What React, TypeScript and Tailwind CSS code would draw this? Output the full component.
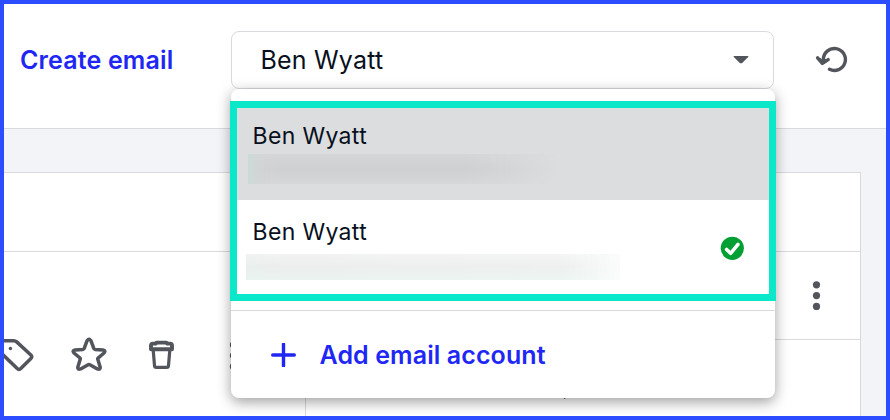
const ACCOUNTS = [
  { id: "primary", name: "Ben Wyatt", highlighted: true, connected: false },
  { id: "secondary", name: "Ben Wyatt", highlighted: false, connected: true },
];

function UndoIcon() {
  return (
    <svg
      className="h-8 w-9 shrink-0"
      viewBox="0 0 36 32"
      fill="none"
      stroke="#52555c"
      strokeWidth="3.4"
      strokeLinecap="round"
      strokeLinejoin="round"
    >
      <path d="M11.4 18V15.5A11 11 0 1 1 17.5 25.3" />
      <path d="M5.6 13.8 10.4 19.4 16.2 15.6" />
      <path d="M8 15.8 10.6 18.6 13.6 16.8" />
    </svg>
  );
}

function TagIcon() {
  return (
    <svg
      className="h-9 w-8 shrink-0"
      viewBox="0 0 32 36"
      fill="none"
      stroke="#52555c"
      strokeWidth="3.5"
      strokeLinejoin="round"
    >
      <path d="M-2 3.7H9.7Q11.4 3.7 12.7 4.9L26.9 18Q28.7 19.8 26.9 21.6L16.8 31.6Q15 33.4 13.2 31.6L-2 16.8" />
      <circle cx="6.4" cy="11.5" r="1.7" fill="#52555c" stroke="none" />
    </svg>
  );
}

function StarIcon() {
  return (
    <svg
      className="h-9 w-9 shrink-0"
      viewBox="0 0 36 36"
      fill="none"
      stroke="#52555c"
      strokeWidth="3.5"
      strokeLinejoin="round"
    >
      <path d="M16.1 3.7Q18 1 19.9 3.7L22.8 11.4Q23.1 12.2 24 12.4L31.9 13Q35.2 13.5 33 16L27.3 20.8Q26.5 21.5 26.8 22.3L29.2 30.2Q29.4 33.2 26.4 32L18.9 27.7Q18 27.2 17.1 27.7L9.6 32Q6.6 33.2 6.8 30.2L9.2 22.3Q9.5 21.5 8.7 20.8L3 16Q.8 13.5 4.1 13L12 12.4Q12.9 12.2 13.2 11.4Z" />
    </svg>
  );
}

function TrashIcon() {
  return (
    <svg
      className="h-8 w-7 shrink-0"
      viewBox="0 0 28 32"
      fill="none"
      stroke="#52555c"
      strokeWidth="3.2"
      strokeLinejoin="round"
    >
      <path
        d="M4 12.2V8.6Q4 6.6 5.9 6.6H8.5L9.8 5.6H19.2L20.5 6.6H23.1Q25 6.6 25 8.6V12.2Z"
        strokeWidth="3.9"
      />
      <path d="M6.2 13 7.5 28.6Q7.6 30.4 9.4 30.4H19.6Q21.4 30.4 21.5 28.6L22.8 13" />
    </svg>
  );
}

function MoreIcon() {
  return (
    <svg className="h-8 w-8 shrink-0" viewBox="0 0 32 32" fill="#52555c">
      <circle cx="16.5" cy="4.8" r="3.6" />
      <circle cx="16.5" cy="15.6" r="3.6" />
      <circle cx="16.5" cy="26.4" r="3.6" />
    </svg>
  );
}

function CheckBadge() {
  return (
    <svg className="h-6 w-6 shrink-0" viewBox="0 0 24 24" fill="none">
      <circle cx="12.3" cy="12.3" r="11.6" fill="#05a033" />
      <path
        d="m6.6 13.5 4 3.8L18 8.3"
        stroke="#fff"
        strokeWidth="3.6"
        strokeLinecap="round"
        strokeLinejoin="round"
      />
    </svg>
  );
}

/** Account list that opens under the sender select. */
function AccountMenu() {
  return (
    <div className="absolute -left-px top-[57px] z-10 h-[309px] w-[544px] rounded-lg bg-white shadow-[0_4px_14px_rgba(0,0,0,0.38)]">
      <div className="-mx-px mt-3 h-[200px] w-[546px] border-7 border-[#0ae8c9]">
        {ACCOUNTS.map(({ id, name, highlighted, connected }) => (
          <div
            key={id}
            className={
              highlighted
                ? "flex h-[92px] bg-[#dcdddf] pl-[11px] pt-3"
                : "flex h-[94px] bg-white pl-[9px] pt-4"
            }
          >
            <div className="w-[474px]">
              <div
                className={
                  highlighted
                    ? "pl-[4.5px] text-[23px] leading-8 tracking-[0.35px]"
                    : "pl-[6.5px] text-[23px] leading-8 tracking-[0.35px]"
                }
              >
                {name}
              </div>
              {highlighted ? (
                <div className="mt-0.5 h-[30px] w-[314px] bg-linear-to-r from-[#cbdcd7] via-[#d4d5d7] via-5% to-[#dddee0]">
                  <div className="h-full bg-linear-to-b from-[#d5d6d8] via-[#cfd0d2] to-[#d6d7d9] mask-l-from-90% mask-r-from-70%" />
                </div>
              ) : (
                <div className="mt-1.5 h-[26px] w-[374px] bg-linear-to-r from-[#e2f3ee] via-[#eeefef] via-10% to-[#fafdfc]">
                  <div className="h-full bg-linear-to-b from-[#f3f3f3]/80 via-[#ebeded]/80 to-[#e9f4f0]/80 mask-r-from-85%" />
                </div>
              )}
            </div>
            {connected && (
              <div className="pt-5">
                <CheckBadge />
              </div>
            )}
          </div>
        ))}
      </div>
      <button className="mt-[9px] flex h-[88px] w-full items-center border-t border-[#d9dadd] pl-10 text-[#2027f5]">
        <svg
          className="h-6 w-[25px] shrink-0"
          viewBox="0 0 25 24"
          stroke="currentColor"
          strokeWidth="3.4"
          strokeLinecap="round"
        >
          <path d="M12.5 1.2V22.8M1.7 12H23.3" />
        </svg>
        <span className="pl-[23.5px] pt-px text-[25px] font-semibold leading-8 tracking-[0.1px]">
          Add email account
        </span>
      </button>
    </div>
  );
}

function AccountSelect() {
  return (
    <div className="relative flex h-[58px] w-[543px] items-center justify-between rounded-lg border border-[#d9dadd] bg-white pl-[28.5px] pr-6">
      <span className="text-[25px] leading-8 tracking-[0.2px]">Ben Wyatt</span>
      <svg className="h-2 w-4" viewBox="0 0 16 8" fill="#52555c">
        <path d="M1.2 0H14.8Q16 .2 15.2 1L9.2 6.9Q8 7.8 6.8 6.9L.8 1Q0 .2 1.2 0Z" />
      </svg>
      <AccountMenu />
    </div>
  );
}

export default function App() {
  return (
    <div className="flex h-[420px] w-[890px] flex-col overflow-hidden border-4 border-[#2b4dff] bg-[#f3f4f8] font-['Inter',sans-serif] text-[#07101c]">
      <header className="flex h-[125px] shrink-0 items-start border-b border-[#d9dadd] bg-white pt-[27px]">
        <div className="flex h-[58px] w-[227px] shrink-0 items-center pl-4 text-[25px] font-semibold leading-8 tracking-[0.15px] text-[#2027f5]">
          Create email
        </div>
        <AccountSelect />
        <div className="flex h-[58px] items-center pl-[38px]">
          <UndoIcon />
        </div>
      </header>

      <main className="mt-[43px] flex w-[857px] flex-1 flex-col border-r border-t border-[#d9dadd] bg-white">
        <div className="h-[79px] shrink-0 border-b border-[#d9dadd]" />
        <div className="flex flex-1">
          <div className="flex w-[302px] items-start border-r border-[#d9dadd] pt-[85px]">
            <TagIcon />
            <div className="pl-[35px]">
              <StarIcon />
            </div>
            <div className="pl-10">
              <TrashIcon />
            </div>
            <div className="pl-[42px] pt-[3px]">
              <MoreIcon />
            </div>
          </div>
          <div className="flex-1">
            <div className="flex h-[88px] items-center justify-end border-b border-[#d9dadd] pr-7">
              <MoreIcon />
            </div>
            <div className="h-[72px] pl-[257px] pt-10 text-base leading-5 text-[#52555c]">
              ,
            </div>
          </div>
        </div>
      </main>
    </div>
  );
}
